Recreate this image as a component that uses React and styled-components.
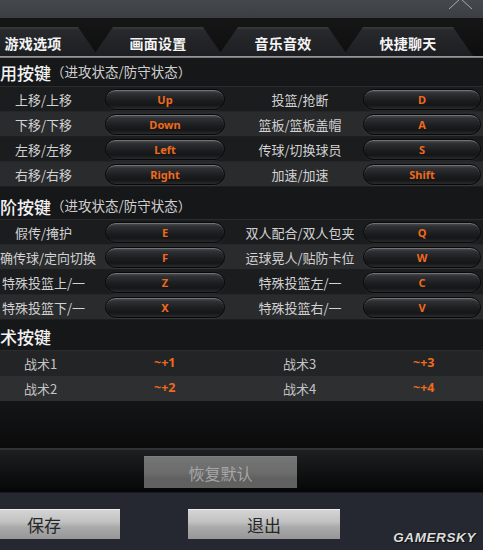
import React from "react";
import styled, { createGlobalStyle } from "styled-components";

const Global = createGlobalStyle`
  html, body { margin: 0; padding: 0; background: #111; }
  body {
    width: 483px; height: 550px; overflow: hidden;
    font-family: "Noto Sans CJK SC", "Noto Sans", sans-serif;
  }
  * { box-sizing: border-box; }
`;

const Window = styled.div`
  width: 483px;
  height: 550px;
  display: flex;
  flex-direction: column;
  overflow: hidden;
  position: relative;
  background: #18191b;
`;

const TitleBar = styled.div`
  height: 18px;
  flex: none;
  background: linear-gradient(180deg, #45484d 0%, #3b3e43 100%);
  display: flex;
  justify-content: flex-end;
  align-items: flex-start;
  padding-right: 9px;
`;

const TabBar = styled.div`
  height: 38px;
  flex: none;
  background: linear-gradient(180deg, #161617 0%, #0e0e0f 100%);
  display: flex;
  align-items: flex-end;
  overflow: hidden;
`;

const TabRow = styled.div`
  display: flex;
  margin-left: -32px;
`;

const Tab = styled.div`
  width: 130px;
  height: 29px;
  flex: none;
  clip-path: polygon(20px 0, 110px 0, 130px 100%, 0 100%);
  background: linear-gradient(180deg, #38393d 0%, #28292c 12%, #1d1e21 100%);
  color: #f4f4f4;
  font-size: 14px;
  font-weight: 700;
  display: flex;
  align-items: center;
  justify-content: center;
  padding-top: 2px;
  letter-spacing: 0.3px;
  & + & { margin-left: -5px; }
`;

const TabRule = styled.div`
  height: 2px;
  flex: none;
  background: linear-gradient(180deg, #a2a2a2, #6e6e6e);
`;

const SectionHeader = styled.div`
  height: ${(p) => p.$h}px;
  flex: none;
  display: flex;
  align-items: center;
  padding-top: ${(p) => p.$pt}px;
  background: #161719;
  border-bottom: 1px solid #2b2c2e;
  white-space: nowrap;
`;

const Title = styled.span`
  font-size: 17px;
  font-weight: 500;
  color: #f2f2f2;
  line-height: 1;
`;

const Sub = styled.span`
  font-size: 13.5px;
  color: #cfcfcf;
  line-height: 1;
`;

const KeyRow = styled.div`
  height: 25px;
  flex: none;
  display: grid;
  grid-template-columns: 105px 120px 138px 118px;
  align-items: center;
  background: ${(p) => (p.$alt ? "#2a2b2d" : "#1b1c1e")};
  border-bottom: 1px solid ${(p) => (p.$alt ? "#1d1e20" : "#252628")};
`;

const Label = styled.div`
  display: flex;
  justify-content: safe center;
  white-space: nowrap;
  color: #d2d2d2;
  font-size: 13px;
  line-height: 1;
  padding-left: ${(p) => (p.$right ? 12 : 0)}px;
  padding-right: ${(p) => (p.$right ? 0 : 18)}px;
`;

const KeyButton = styled.div`
  height: 21px;
  border-radius: 11px;
  border: 1px solid #080808;
  background: linear-gradient(180deg, #505154 0%, #2f3033 18%, #1c1d1f 55%, #151617 80%, #2a2b2d 100%);
  box-shadow: inset 0 1px 0 rgba(255, 255, 255, 0.22), 0 1px 0 rgba(255, 255, 255, 0.06);
  display: flex;
  align-items: center;
  justify-content: center;
  color: #f06a1c;
  font-family: "Noto Sans", "DejaVu Sans", sans-serif;
  font-weight: 700;
  font-size: 11px;
  line-height: 1;
`;

const TacticRow = styled.div`
  height: 25px;
  flex: none;
  display: grid;
  grid-template-columns: 130px 129px 130px 1fr;
  padding-left: 24px;
  align-items: center;
  background: ${(p) => (p.$alt ? "#2e2f31" : "#232426")};
`;

const TacticName = styled.span`
  color: #c4c4c4;
  font-size: 13px;
  line-height: 1;
`;

const TacticKey = styled.span`
  color: #f06a1c;
  font-family: "Noto Sans", "DejaVu Sans", sans-serif;
  font-weight: 700;
  font-size: 12.5px;
  line-height: 1;
`;

const Spacer = styled.div`
  flex: 1;
  background: linear-gradient(180deg, #141517 0%, #0b0b0c 100%);
`;

const RestorePanel = styled.div`
  height: 44px;
  flex: none;
  border-top: 2px solid #333335;
  background: linear-gradient(180deg, #1e1f21 0%, #111213 50%, #060606 100%);
  padding: 6px 0 0 144px;
  display: flex;
  align-items: flex-start;
`;

const RestoreButton = styled.div`
  width: 153px;
  height: 32px;
  background: linear-gradient(180deg, #747474 0%, #6c6c6c 50%, #606060 70%, #616161 100%);
  border-top: 1px solid #7e7e7e;
  color: #a6a6a6;
  font-size: 16px;
  display: flex;
  align-items: center;
  justify-content: center;
`;

const BottomBar = styled.div`
  height: 58px;
  flex: none;
  background: #252830;
  border-top: 1px solid #181a1f;
  padding-top: 16px;
  overflow: hidden;
`;

const ButtonRow = styled.div`
  display: flex;
  gap: 68px;
  margin-left: -32px;
`;

const BigButton = styled.div`
  width: 152px;
  height: 30px;
  background: linear-gradient(180deg, #d4d4d4 0%, #c2c2c2 40%, #a9a9a9 60%, #979797 100%);
  border-top: 1px solid #ececec;
  color: #272727;
  font-size: 17px;
  display: flex;
  align-items: center;
  justify-content: center;
`;

const Watermark = styled.div`
  position: absolute;
  right: 7px;
  bottom: 5px;
  font-family: "Liberation Sans", Arial, sans-serif;
  font-style: italic;
  font-weight: 900;
  font-size: 13.5px;
  letter-spacing: 0.6px;
  color: #dedede;
  text-shadow: 0 0 1px #000, 1px 1px 0 #111, -1px 0 0 #333;
`;

const CloseIcon = () => (
  <svg width="26" height="9" viewBox="0 0 26 9">
    <path d="M1 9 L12.5 -1.5 L24 9" fill="none" stroke="#a9acb1" strokeWidth="1" />
  </svg>
);

const tabs = ["游戏选项", "画面设置", "音乐音效", "快捷聊天"];

const common = [
  ["上移/上移", "Up", "投篮/抢断", "D"],
  ["下移/下移", "Down", "篮板/篮板盖帽", "A"],
  ["左移/左移", "Left", "传球/切换球员", "S"],
  ["右移/右移", "Right", "加速/加速", "Shift"],
];

const advanced = [
  ["假传/掩护", "E", "双人配合/双人包夹", "Q"],
  ["确传球/定向切换", "F", "运球晃人/贴防卡位", "W"],
  ["特殊投篮上/一", "Z", "特殊投篮左/一", "C"],
  ["特殊投篮下/一", "X", "特殊投篮右/一", "V"],
];

const tactics = [
  ["战术1", "~+1", "战术3", "~+3"],
  ["战术2", "~+2", "战术4", "~+4"],
];

const KeyRows = ({ rows }) =>
  rows.map((r, i) => (
    <KeyRow key={i} $alt={i % 2 === 1}>
      <Label>{r[0]}</Label>
      <KeyButton>{r[1]}</KeyButton>
      <Label $right>{r[2]}</Label>
      <KeyButton>{r[3]}</KeyButton>
    </KeyRow>
  ));

export default function App() {
  return (
    <>
      <Global />
      <Window>
        <TitleBar>
          <CloseIcon />
        </TitleBar>
        <TabBar>
          <TabRow>
            {tabs.map((t) => (
              <Tab key={t}>{t}</Tab>
            ))}
          </TabRow>
        </TabBar>
        <TabRule />

        <SectionHeader $h={29} $pt={0}>
          <Title>用按键</Title>
          <Sub>（进攻状态/防守状态）</Sub>
        </SectionHeader>
        <KeyRows rows={common} />

        <SectionHeader $h={33} $pt={6}>
          <Title>阶按键</Title>
          <Sub>（进攻状态/防守状态）</Sub>
        </SectionHeader>
        <KeyRows rows={advanced} />

        <SectionHeader $h={31} $pt={3}>
          <Title>术按键</Title>
        </SectionHeader>
        {tactics.map((r, i) => (
          <TacticRow key={i} $alt={i === 1}>
            <TacticName>{r[0]}</TacticName>
            <TacticKey>{r[1]}</TacticKey>
            <TacticName>{r[2]}</TacticName>
            <TacticKey>{r[3]}</TacticKey>
          </TacticRow>
        ))}
        <Spacer />

        <RestorePanel>
          <RestoreButton>恢复默认</RestoreButton>
        </RestorePanel>
        <BottomBar>
          <ButtonRow>
            <BigButton>保存</BigButton>
            <BigButton>退出</BigButton>
          </ButtonRow>
        </BottomBar>
        <Watermark>GAMERSKY</Watermark>
      </Window>
    </>
  );
}
